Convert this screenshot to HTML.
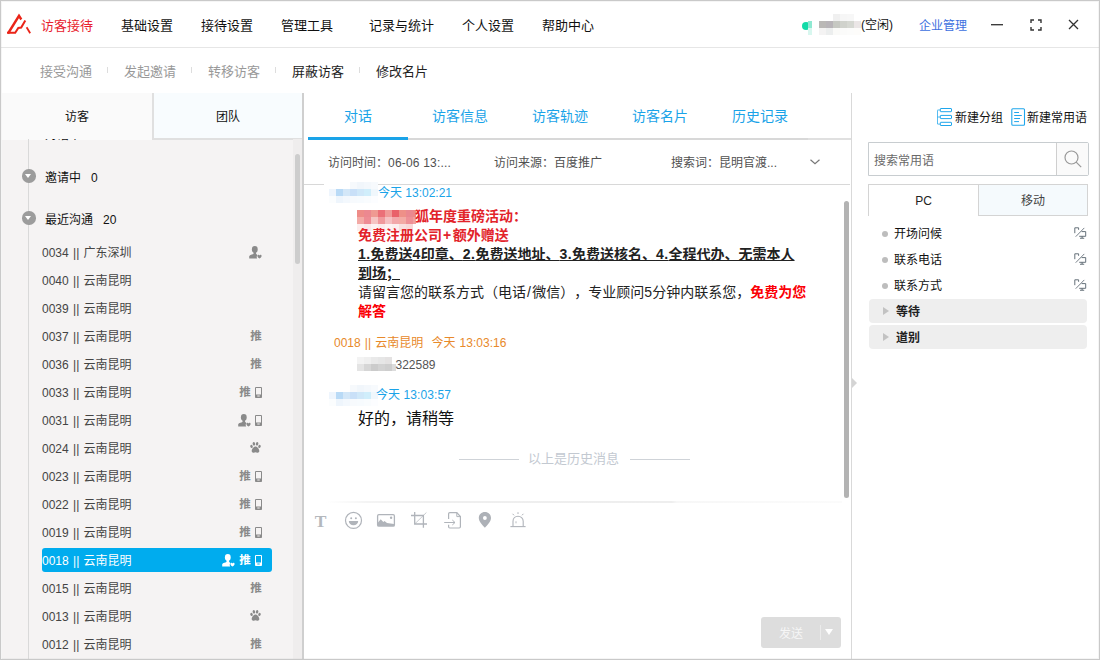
<!DOCTYPE html>
<html lang="zh-CN">
<head>
<meta charset="utf-8">
<title>访客接待</title>
<style>
*{box-sizing:border-box;margin:0;padding:0}
html,body{width:1100px;height:660px;overflow:hidden;background:#fff}
body{text-spacing-trim:space-all;font-kerning:none;font-family:"Liberation Sans","Noto Sans CJK SC",sans-serif;font-size:12px;color:#222;position:relative}
.abs{position:absolute}
#frame{position:absolute;left:0;top:0;width:1100px;height:660px;border:1px solid #c9c9c9;box-shadow:inset 0 0 0 1px rgba(200,200,200,.18);pointer-events:none;z-index:50}
/* top nav */
#nav{position:absolute;left:0;top:0;width:1100px;height:48px;border-bottom:1px solid #e6e6e6;background:#fff}
#nav .it{position:absolute;top:17px;font-size:13px;line-height:18px;color:#111;white-space:nowrap}
#nav .it.act{color:#e8232f}
#sub{position:absolute;left:0;top:48px;width:1100px;height:45px;background:#fff}
#sub .it{position:absolute;top:15px;font-size:13px;line-height:18px;color:#999;white-space:nowrap}
#sub .it.on{color:#222}
#sub .sep{position:absolute;top:19px;width:1px;height:6px;background:#ddd}
/* left */
#left{position:absolute;left:2px;top:93px;width:300px;height:566px;background:#f5f3f3}
#ltabs{position:absolute;left:0;top:0;width:300px;height:47px}
#ltabs .t{position:absolute;top:0;height:47px;text-align:center;line-height:48px;font-size:12px;color:#111}
#ltabs .t1{left:0;width:150px;background:#fafafa}
#ltabs .t2{left:150px;width:150px;background:#f8fcfe;border-left:2px solid #e0e0e0;border-bottom:2px solid #e0e0e0}
#lrule{position:absolute;left:302px;top:93px;width:2px;height:566px;background:#cfcfcf}
#tree{position:absolute;left:26px;top:46px;width:1px;height:520px;background:#d9d9d9}
.grp{position:absolute;left:45px;font-size:12px;line-height:16px;color:#111;white-space:nowrap}
.garrow{position:absolute;left:22px;width:13.500px;height:13.500px;border-radius:50%;background:#9c9c9c}
.garrow:after{content:"";position:absolute;left:3px;top:5px;border:3.5px solid transparent;border-top:4px solid #fff;border-bottom:0}
.row{position:absolute;left:42px;width:230px;height:24px;line-height:26px;word-spacing:1px;font-size:12px;color:#444;white-space:nowrap;border-radius:2px}
.row.sel{background:#00acee;color:#fff;border-radius:3px}
.row .ic{position:absolute;right:10px;top:0;height:24px;display:flex;align-items:center;gap:4px;color:#8a8a8a;font-size:10px;font-weight:bold}
.row.sel .ic{color:#fff}
.tui{font-size:11.500px;font-weight:bold;line-height:12px;display:inline-block;width:12px;margin-top:0;text-align:center}
#lsb{position:absolute;left:293px;top:139px;width:9px;height:520px;background:#efeded}
#lsbt{position:absolute;left:295px;top:154px;width:5px;height:110px;border-radius:3px;background:#cdcdcd}
/* center */
#ctabs .t{position:absolute;top:107px;font-size:14px;line-height:18px;color:#1aa3e8;white-space:nowrap}
#cund{position:absolute;left:308px;top:137px;width:100px;height:3px;background:#1aa3e8}
#cline{position:absolute;left:408px;top:138px;width:400px;height:2px;background:#d8d8d8}
#info{position:absolute;left:304px;top:140px;width:546px;height:45px;border-bottom:1px solid #d8d8d8}
#info span{position:absolute;top:15px;font-size:12px;line-height:16px;color:#505050;white-space:nowrap}
#csb{position:absolute;left:844px;top:201px;width:5px;height:297px;border-radius:2.500px;background:#b3b3b3}
.nm{position:absolute;font-size:12px;line-height:16px;white-space:nowrap}
.blue{color:#1aa3e8}.org{color:#e8892a}
.msg{position:absolute;left:358px;white-space:nowrap}
.msg{font-size:14px;line-height:19px;color:#222}
.msg i{font-style:normal;letter-spacing:.45px}
.b{font-weight:bold}.u{text-decoration:underline}.red{color:#e2232a}
#send{position:absolute;left:761px;top:617px;width:80px;height:31px;border-radius:3px;background:#dddddd}
#send .st{position:absolute;left:18px;top:8.500px;font-size:12px;line-height:16px;color:#f6f6f6}
#send .sd{position:absolute;left:59px;top:8px;width:1px;height:15px;background:#ebebeb}
#send .sa{position:absolute;left:64px;top:12px;border:4px solid transparent;border-top:6px solid #fff;border-bottom:0}
/* right */
.rt{position:absolute;top:110px;font-size:12px;line-height:16px;color:#111;white-space:nowrap}
#sbox{position:absolute;left:868px;top:142px;width:221px;height:34px;border-radius:0 2px 2px 0;border:1px solid #c8cdd0;background:#fff}
#sbox .ph{position:absolute;left:5px;top:10px;font-size:12px;line-height:16px;color:#6a6a6a}
#sbox .sbtn{position:absolute;right:0;top:0;width:32px;height:32px;border-left:1px solid #cfcfcf;background:#fafafa;display:flex;align-items:center;justify-content:center}
#rtabs{position:absolute;left:868px;top:184px;width:220px;height:32px}
#rtabs div{position:absolute;top:0;height:32px;line-height:33px;text-align:center;font-size:12px}
#rtabs .rt1{left:0;width:110px;border:1px solid #d4d4d4;border-bottom:0;border-right:0;color:#222;background:#fff}
#rtabs .rt2{left:110px;width:110px;border:1px solid #d4d4d4;color:#444;background:#f5fafd}
.ri{position:absolute;left:868px;width:220px;height:18px;line-height:18px;font-size:12px;color:#111;padding-left:26px;white-space:nowrap}
.ri i{position:absolute;left:13.500px;top:6px;width:6px;height:6px;border-radius:50%;background:#bdbdbd}
.ri .em{position:absolute;left:205.500px;top:1.500px}
.rg{position:absolute;left:869px;width:218px;height:24px;line-height:26px;border-radius:4px;background:#eeeeee;font-size:12px;font-weight:600;color:#222;padding-left:27px}
.rg s{position:absolute;left:14px;top:8px;border:4.500px solid transparent;border-left:6px solid #c2c2c2;border-right:0}
#rrule{position:absolute;left:851px;top:93px;width:1px;height:566px;background:#d9d9d9}
</style>
</head>
<body>
<div id="nav">
  <svg class="abs" style="left:0;top:0" width="40" height="48" viewBox="0 0 40 48"><g fill="none" stroke="#ea2418" stroke-linejoin="miter"><path d="M8 33.500L19 15.800L21.300 19.500" stroke-width="2.400"/><path d="M7 32.800H15.200L18.300 28L21.200 27.600L25.300 20.600" stroke-width="2"/><path d="M26.600 27.300L30.200 33.300" stroke-width="1.800"/></g></svg>
  <span class="it act" style="left:41px">访客接待</span>
  <span class="it" style="left:121px">基础设置</span>
  <span class="it" style="left:201px">接待设置</span>
  <span class="it" style="left:281px">管理工具</span>
  <span class="it" style="left:369px">记录与统计</span>
  <span class="it" style="left:462px">个人设置</span>
  <span class="it" style="left:542px">帮助中心</span>
  <span class="abs" style="left:801.500px;top:22px;width:8px;height:8px;border-radius:50%;background:#12dba8"></span><span class="abs" style="left:808px;top:21px;width:4px;height:7px;background:#8fe9d2"></span><span class="abs" style="left:808px;top:28px;width:4px;height:7px;background:#d8f7ef"></span><svg class="abs" style="left:819px;top:14px" width="42" height="21" viewBox="0 0 42 21" shape-rendering="crispEdges"><rect x="14" y="0" width="7" height="7" fill="#f0f0f0"/><rect x="21" y="0" width="7" height="7" fill="#f6f6f6"/><rect x="28" y="0" width="7" height="7" fill="#f7f7f7"/><rect x="0" y="7" width="7" height="7" fill="#bab8b6"/><rect x="7" y="7" width="7" height="7" fill="#b8b4b8"/><rect x="14" y="7" width="7" height="7" fill="#c6c8c2"/><rect x="21" y="7" width="7" height="7" fill="#d0d2cc"/><rect x="28" y="7" width="7" height="7" fill="#d6d8d2"/><rect x="35" y="7" width="7" height="7" fill="#ebe6e6"/><rect x="0" y="14" width="7" height="7" fill="#f4f3f3"/><rect x="7" y="14" width="7" height="7" fill="#eceeee"/><rect x="14" y="14" width="7" height="7" fill="#fafaf8"/><rect x="21" y="14" width="7" height="7" fill="#fbfbfa"/><rect x="28" y="14" width="7" height="7" fill="#fcfcfb"/><rect x="35" y="14" width="7" height="7" fill="#fdfcfa"/></svg>
  <span class="it" style="left:861px;top:16px;font-size:12px;color:#111">(空闲)</span>
  <span class="it" style="left:919px;font-size:12px;color:#3c6fe0">企业管理</span>
  <span class="abs" style="left:991px;top:24px;width:12px;height:2px;background:linear-gradient(#3c3c3c 50%,#b4b4b4 50%)"></span>
  <svg class="abs" style="left:1030px;top:19px" width="12" height="12" viewBox="0 0 12 12"><path d="M1 4V1h3M8 1h3v3M11 8v3H8M4 11H1V8" fill="none" stroke="#333" stroke-width="1.4"/></svg>
  <svg class="abs" style="left:1068px;top:19px" width="11" height="11" viewBox="0 0 11 11"><path d="M1 1l9 9M10 1l-9 9" fill="none" stroke="#333" stroke-width="1.3"/></svg>
</div>
<div id="sub">
  <span class="it" style="left:40px">接受沟通</span><span class="sep" style="left:107px"></span>
  <span class="it" style="left:124px">发起邀请</span><span class="sep" style="left:191px"></span>
  <span class="it" style="left:208px">转移访客</span><span class="sep" style="left:275px"></span>
  <span class="it on" style="left:292px">屏蔽访客</span><span class="sep" style="left:359px"></span>
  <span class="it on" style="left:376px">修改名片</span>
</div>

<div id="left">
  <div id="ltabs"><div class="t t1">访客</div><div class="t t2">团队</div></div>
  <div id="tree"></div>
</div>
<div id="lsb"></div><div id="lsbt"></div>
<div id="lrule"></div>
<div id="leftrows">
<div class="abs" style="left:28px;top:126px;width:260px;height:16px;overflow:hidden;"></div>
<div class="abs" style="left:2px;top:139px;width:290px;height:2px;overflow:hidden"><span class="grp" style="top:-12px;left:43px">对话中&nbsp;&nbsp;0</span></div>
<span class="garrow" style="top:169px"></span><span class="grp" style="top:170px">邀请中&nbsp;&nbsp;&nbsp;0</span>
<span class="garrow" style="top:211px"></span><span class="grp" style="top:212px">最近沟通&nbsp;&nbsp;&nbsp;20</span>
<div class="row" style="top:240px">0034 || 广东深圳<span class="ic"><svg width="13" height="13" viewBox="0 0 13 13"><ellipse cx="5.800" cy="3.400" rx="2.900" ry="3.300" fill="currentColor"/><rect x="4.500" y="5.500" width="2.600" height="3.500" fill="currentColor"/><path d="M0.200 12.400V10.600C0.200 9.600 1 9.200 4.600 8H7C8 8.400 8.300 8.800 8.300 9.600C7.600 10.200 7.500 11.400 8.200 12.400Z" fill="currentColor"/><path d="M8.600 9.200C9.200 8.600 10.200 8.800 10.500 9.600C10.800 8.800 11.800 8.600 12.400 9.200C13 10 12.400 11.200 10.500 12.600C8.600 11.200 8 10 8.600 9.200Z" fill="currentColor"/></svg></span></div>
<div class="row" style="top:268px">0040 || 云南昆明<span class="ic"></span></div>
<div class="row" style="top:296px">0039 || 云南昆明<span class="ic"></span></div>
<div class="row" style="top:324px">0037 || 云南昆明<span class="ic"><span class="tui">推</span></span></div>
<div class="row" style="top:352px">0036 || 云南昆明<span class="ic"><span class="tui">推</span></span></div>
<div class="row" style="top:380px">0033 || 云南昆明<span class="ic"><span class="tui">推</span><svg width="7" height="11" viewBox="0 0 7 11"><path d="M0.500 0.500H6.500V10.500H0.500Z" fill="none" stroke="currentColor" stroke-width="1"/><path d="M0.500 7.600H6.500V10.500H0.500ZM2.300 8.600V9.600H4.700V8.600Z" fill="currentColor" fill-rule="evenodd"/></svg></span></div>
<div class="row" style="top:408px">0031 || 云南昆明<span class="ic"><svg width="13" height="13" viewBox="0 0 13 13"><ellipse cx="5.800" cy="3.400" rx="2.900" ry="3.300" fill="currentColor"/><rect x="4.500" y="5.500" width="2.600" height="3.500" fill="currentColor"/><path d="M0.200 12.400V10.600C0.200 9.600 1 9.200 4.600 8H7C8 8.400 8.300 8.800 8.300 9.600C7.600 10.200 7.500 11.400 8.200 12.400Z" fill="currentColor"/><path d="M8.600 9.200C9.200 8.600 10.200 8.800 10.500 9.600C10.800 8.800 11.800 8.600 12.400 9.200C13 10 12.400 11.200 10.500 12.600C8.600 11.200 8 10 8.600 9.200Z" fill="currentColor"/></svg><svg width="7" height="11" viewBox="0 0 7 11"><path d="M0.500 0.500H6.500V10.500H0.500Z" fill="none" stroke="currentColor" stroke-width="1"/><path d="M0.500 7.600H6.500V10.500H0.500ZM2.300 8.600V9.600H4.700V8.600Z" fill="currentColor" fill-rule="evenodd"/></svg></span></div>
<div class="row" style="top:436px">0024 || 云南昆明<span class="ic"><svg width="11" height="11" viewBox="0 0 11 11" style="position:relative;top:-1px;left:-1px"><ellipse cx="1.500" cy="4.400" rx="1.200" ry="1.600" fill="currentColor" transform="rotate(-20 1.500 4.400)"/><ellipse cx="3.900" cy="1.800" rx="1.250" ry="1.700" fill="currentColor" transform="rotate(-8 3.900 1.800)"/><ellipse cx="7.100" cy="1.800" rx="1.250" ry="1.700" fill="currentColor" transform="rotate(8 7.100 1.800)"/><ellipse cx="9.500" cy="4.400" rx="1.200" ry="1.600" fill="currentColor" transform="rotate(20 9.500 4.400)"/><path d="M5.500 4.600C7.300 4.600 9.300 7.400 9.300 9.100C9.300 10.300 8.300 10.900 7.300 10.700C6.600 10.500 6.100 10.200 5.500 10.200S4.400 10.500 3.700 10.700C2.700 10.900 1.700 10.300 1.700 9.100C1.700 7.400 3.700 4.600 5.500 4.600Z" fill="currentColor"/></svg></span></div>
<div class="row" style="top:464px">0023 || 云南昆明<span class="ic"><span class="tui">推</span><svg width="7" height="11" viewBox="0 0 7 11"><path d="M0.500 0.500H6.500V10.500H0.500Z" fill="none" stroke="currentColor" stroke-width="1"/><path d="M0.500 7.600H6.500V10.500H0.500ZM2.300 8.600V9.600H4.700V8.600Z" fill="currentColor" fill-rule="evenodd"/></svg></span></div>
<div class="row" style="top:492px">0022 || 云南昆明<span class="ic"><span class="tui">推</span><svg width="7" height="11" viewBox="0 0 7 11"><path d="M0.500 0.500H6.500V10.500H0.500Z" fill="none" stroke="currentColor" stroke-width="1"/><path d="M0.500 7.600H6.500V10.500H0.500ZM2.300 8.600V9.600H4.700V8.600Z" fill="currentColor" fill-rule="evenodd"/></svg></span></div>
<div class="row" style="top:520px">0019 || 云南昆明<span class="ic"><span class="tui">推</span><svg width="7" height="11" viewBox="0 0 7 11"><path d="M0.500 0.500H6.500V10.500H0.500Z" fill="none" stroke="currentColor" stroke-width="1"/><path d="M0.500 7.600H6.500V10.500H0.500ZM2.300 8.600V9.600H4.700V8.600Z" fill="currentColor" fill-rule="evenodd"/></svg></span></div>
<div class="row sel" style="top:548px">0018 || 云南昆明<span class="ic"><svg width="13" height="13" viewBox="0 0 13 13"><ellipse cx="5.800" cy="3.400" rx="2.900" ry="3.300" fill="currentColor"/><rect x="4.500" y="5.500" width="2.600" height="3.500" fill="currentColor"/><path d="M0.200 12.400V10.600C0.200 9.600 1 9.200 4.600 8H7C8 8.400 8.300 8.800 8.300 9.600C7.600 10.200 7.500 11.400 8.200 12.400Z" fill="currentColor"/><path d="M8.600 9.200C9.200 8.600 10.200 8.800 10.500 9.600C10.800 8.800 11.800 8.600 12.400 9.200C13 10 12.400 11.200 10.500 12.600C8.600 11.200 8 10 8.600 9.200Z" fill="currentColor"/></svg><span class="tui">推</span><svg width="7" height="11" viewBox="0 0 7 11"><path d="M0.500 0.500H6.500V10.500H0.500Z" fill="none" stroke="currentColor" stroke-width="1"/><path d="M0.500 7.600H6.500V10.500H0.500ZM2.300 8.600V9.600H4.700V8.600Z" fill="currentColor" fill-rule="evenodd"/></svg></span></div>
<div class="row" style="top:576px">0015 || 云南昆明<span class="ic"><span class="tui">推</span></span></div>
<div class="row" style="top:604px">0013 || 云南昆明<span class="ic"><svg width="11" height="11" viewBox="0 0 11 11" style="position:relative;top:-1px;left:-1px"><ellipse cx="1.500" cy="4.400" rx="1.200" ry="1.600" fill="currentColor" transform="rotate(-20 1.500 4.400)"/><ellipse cx="3.900" cy="1.800" rx="1.250" ry="1.700" fill="currentColor" transform="rotate(-8 3.900 1.800)"/><ellipse cx="7.100" cy="1.800" rx="1.250" ry="1.700" fill="currentColor" transform="rotate(8 7.100 1.800)"/><ellipse cx="9.500" cy="4.400" rx="1.200" ry="1.600" fill="currentColor" transform="rotate(20 9.500 4.400)"/><path d="M5.500 4.600C7.300 4.600 9.300 7.400 9.300 9.100C9.300 10.300 8.300 10.900 7.300 10.700C6.600 10.500 6.100 10.200 5.500 10.200S4.400 10.500 3.700 10.700C2.700 10.900 1.700 10.300 1.700 9.100C1.700 7.400 3.700 4.600 5.500 4.600Z" fill="currentColor"/></svg></span></div>
<div class="row" style="top:632px">0012 || 云南昆明<span class="ic"><span class="tui">推</span></span></div>
</div>

<div id="center">
  <div id="ctabs">
    <span class="t" style="left:344px">对话</span>
    <span class="t" style="left:432px">访客信息</span>
    <span class="t" style="left:532px">访客轨迹</span>
    <span class="t" style="left:632px">访客名片</span>
    <span class="t" style="left:732px">历史记录</span>
  </div>
  <div id="cline"></div><div class="abs" style="left:808px;top:138px;width:43px;height:2px;background:#e0e0e0"></div><div id="cund"></div>
  <div id="info">
    <span style="left:24px">访问时间：<i style="font-style:normal;letter-spacing:.2px">06-06 13:...</i></span>
    <span style="left:190px">访问来源：百度推广</span>
    <span style="left:367px">搜索词：昆明官渡...</span>
    <svg class="abs" style="left:506px;top:19px" width="10" height="6" viewBox="0 0 10 6"><path d="M0.500 0.800l4.500 3.800 4.500-3.800" fill="none" stroke="#777" stroke-width="1.200"/></svg>
  </div>
  <div id="chat">
    <span class="abs" style="left:324px;top:183px;width:51px;height:3px;background:#fff"></span>
    <svg class="abs" style="left:329px;top:182px" width="49" height="21" viewBox="0 0 49 21" shape-rendering="crispEdges"><rect x="21" y="0" width="7" height="7" fill="#f6f9fc"/><rect x="28" y="0" width="7" height="7" fill="#f1f6fb"/><rect x="35" y="0" width="7" height="7" fill="#f4f8fc"/><rect x="42" y="0" width="7" height="7" fill="#f7fafd"/><rect x="0" y="7" width="7" height="7" fill="#eef5fd"/><rect x="7" y="7" width="7" height="7" fill="#b9daf6"/><rect x="14" y="7" width="7" height="7" fill="#d3e7f8"/><rect x="21" y="7" width="7" height="7" fill="#c9e0f8"/><rect x="28" y="7" width="7" height="7" fill="#d0e8f9"/><rect x="35" y="7" width="7" height="7" fill="#d0eefb"/><rect x="42" y="7" width="7" height="7" fill="#f0f7fc"/><rect x="0" y="14" width="7" height="7" fill="#fbfdfe"/><rect x="7" y="14" width="7" height="7" fill="#eef5fc"/><rect x="14" y="14" width="7" height="7" fill="#f3f8fd"/><rect x="21" y="14" width="7" height="7" fill="#f7fafd"/><rect x="28" y="14" width="7" height="7" fill="#f7fbfe"/><rect x="35" y="14" width="7" height="7" fill="#f9fcfe"/><rect x="42" y="14" width="7" height="7" fill="#fcfdff"/></svg>
    <span class="nm blue" style="left:378px;top:185px">今天 13:02:21</span>
    <svg class="abs" style="left:357px;top:210px" width="59" height="21" viewBox="0 0 59 21" shape-rendering="crispEdges"><rect x="0" y="0" width="7" height="7" fill="#ee8c88"/><rect x="7" y="0" width="7" height="7" fill="#ec8890"/><rect x="14" y="0" width="7" height="7" fill="#ef9a92"/><rect x="21" y="0" width="7" height="7" fill="#eb7078"/><rect x="28" y="0" width="7" height="7" fill="#f09a98"/><rect x="35" y="0" width="7" height="7" fill="#e9626a"/><rect x="42" y="0" width="7" height="7" fill="#ee9088"/><rect x="49" y="0" width="7" height="7" fill="#ea8890"/><rect x="56" y="0" width="7" height="7" fill="#ee8888"/><rect x="0" y="7" width="7" height="7" fill="#f3aaa6"/><rect x="7" y="7" width="7" height="7" fill="#ee8c94"/><rect x="14" y="7" width="7" height="7" fill="#f6c4c2"/><rect x="21" y="7" width="7" height="7" fill="#f0999c"/><rect x="28" y="7" width="7" height="7" fill="#f5c0c2"/><rect x="35" y="7" width="7" height="7" fill="#f2a8aa"/><rect x="42" y="7" width="7" height="7" fill="#f3aaa4"/><rect x="49" y="7" width="7" height="7" fill="#ee9096"/><rect x="56" y="7" width="7" height="7" fill="#f0a0a0"/><rect x="0" y="14" width="7" height="7" fill="#fdeeee"/><rect x="7" y="14" width="7" height="7" fill="#fbe8e8"/><rect x="14" y="14" width="7" height="7" fill="#fdf2f2"/><rect x="21" y="14" width="7" height="7" fill="#fcecec"/><rect x="28" y="14" width="7" height="7" fill="#fdf3f3"/><rect x="35" y="14" width="7" height="7" fill="#fcefef"/><rect x="42" y="14" width="7" height="7" fill="#f9dede"/><rect x="49" y="14" width="7" height="7" fill="#f8d8d8"/></svg>
    <span class="msg b red" style="left:415px;top:207px">狐年度重磅活动：</span>
    <span class="msg b red" style="top:226px">免费注册公司<i style="padding:0 1px">+</i>额外赠送</span>
    <span class="msg b u" style="top:245px"><i>1.</i>免费送<i>4</i>印章、<i>2.</i>免费送地址、<i>3.</i>免费送核名、<i>4.</i>全程代办、无需本人</span>
    <span class="msg b u" style="top:264px">到场；</span>
    <span class="msg" style="top:283px">请留言您的联系方式（电话<i style="padding:0 1px">/</i>微信），专业顾问5分钟内联系您，<b style="color:#fb0006">免费为您</b></span>
    <span class="msg b" style="top:302px;color:#fb0006">解答</span>
    <span class="nm org" style="left:334px;top:335px;word-spacing:.800px">0018 || 云南昆明&nbsp;&nbsp;今天 13:03:16</span>
    <svg class="abs" style="left:357px;top:357px" width="38.5" height="14" viewBox="0 0 38.5 14" shape-rendering="crispEdges"><rect x="0" y="0" width="7" height="7" fill="#f3f3f3"/><rect x="7" y="0" width="7" height="7" fill="#efefef"/><rect x="14" y="0" width="7" height="7" fill="#e9e9e9"/><rect x="21" y="0" width="7" height="7" fill="#e6e6e6"/><rect x="28" y="0" width="7" height="7" fill="#e4e2e2"/><rect x="0" y="7" width="7" height="7" fill="#e4e4e4"/><rect x="7" y="7" width="7" height="7" fill="#d6d6d6"/><rect x="14" y="7" width="7" height="7" fill="#cbcbcb"/><rect x="21" y="7" width="7" height="7" fill="#d2d2d2"/><rect x="28" y="7" width="7" height="7" fill="#cecece"/><rect x="35" y="7" width="7" height="7" fill="#dcdcdc"/></svg>
    <span class="nm" style="left:395.500px;top:357px;color:#555">322589</span>
    <svg class="abs" style="left:329px;top:385px" width="49" height="21" viewBox="0 0 49 21" shape-rendering="crispEdges"><rect x="21" y="0" width="7" height="7" fill="#f6f9fc"/><rect x="28" y="0" width="7" height="7" fill="#f1f6fb"/><rect x="35" y="0" width="7" height="7" fill="#f4f8fc"/><rect x="42" y="0" width="7" height="7" fill="#f7fafd"/><rect x="0" y="7" width="7" height="7" fill="#eef5fd"/><rect x="7" y="7" width="7" height="7" fill="#b9daf6"/><rect x="14" y="7" width="7" height="7" fill="#d3e7f8"/><rect x="21" y="7" width="7" height="7" fill="#c9e0f8"/><rect x="28" y="7" width="7" height="7" fill="#d0e8f9"/><rect x="35" y="7" width="7" height="7" fill="#d0eefb"/><rect x="42" y="7" width="7" height="7" fill="#f0f7fc"/><rect x="0" y="14" width="7" height="7" fill="#fbfdfe"/><rect x="7" y="14" width="7" height="7" fill="#eef5fc"/><rect x="14" y="14" width="7" height="7" fill="#f3f8fd"/><rect x="21" y="14" width="7" height="7" fill="#f7fafd"/><rect x="28" y="14" width="7" height="7" fill="#f7fbfe"/><rect x="35" y="14" width="7" height="7" fill="#f9fcfe"/><rect x="42" y="14" width="7" height="7" fill="#fcfdff"/></svg>
    <span class="nm blue" style="left:376px;top:387px;letter-spacing:.08px">今天 13:03:57</span>
    <span class="msg" style="top:408px;font-size:16px;line-height:22px;color:#111">好的，请稍等</span>
    <span class="abs" style="left:459px;top:459px;width:60px;height:1px;background:#cfd3d8"></span>
    <span class="abs" style="left:630px;top:459px;width:60px;height:1px;background:#cfd3d8"></span>
    <span class="msg" style="left:528px;top:450px;font-size:13px;line-height:18px;color:#c3c9d1">以上是历史消息</span>
    <div id="csb"></div>
    <span class="abs" style="left:326px;top:501px;width:516px;height:2px;background:linear-gradient(90deg,#fff,#f4f4f4 8%,#efefef 20%,#eeeeee 67%,#f7f7f7 68%,#fbfbfb)"></span>
  </div>
  <div id="tools">
  <span class="abs" style="left:314px;top:510px;width:13px;font:bold 17.500px/22px 'Liberation Serif',serif;color:#b4b8bd;text-align:center">T</span>
  <svg class="abs" style="left:340px;top:506px" width="194" height="28" viewBox="340 506 194 28" fill="none" stroke="#b0b4ba" stroke-width="1.200">
    <circle cx="353.500" cy="520.400" r="8"/>
    <circle cx="351.200" cy="518.200" r="1" fill="#b0b4ba" stroke="none"/><circle cx="355.900" cy="518.200" r="1" fill="#b0b4ba" stroke="none"/>
    <path d="M348.800 521H358.200C358.200 523.600 356.200 525.300 353.500 525.300S348.800 523.600 348.800 521Z" fill="#b0b4ba" stroke="none"/>
    <rect x="377.600" y="514.600" width="16.800" height="11.600" rx="1.300" stroke-width="1.300"/>
    <path d="M378 526V522.500L380.700 519.300L383.300 522L384.500 521L387 523L394 524V526Z" fill="#b0b4ba" stroke="none"/>
    <circle cx="391.100" cy="517.800" r="1.200" fill="#b0b4ba" stroke="none"/>
    <path d="M414.700 512V524H427M411 515.500H423.400V527.700" stroke-width="1.300"/>
    <path d="M415 523.700L426.400 512.500" stroke-width="0.700"/>
    <path d="M448.600 519V513.800Q448.600 512.600 449.800 512.600H456.800L460.400 516.600V526.800Q460.400 528 459.200 528H449.800Q448.600 528 448.600 526.800V524.800"/>
    <path d="M456.800 512.600V516.600H460.400" stroke-width="1"/>
    <path d="M444.200 522.500H455M452.300 520L455 522.500L452.300 525" stroke-width="1"/>
    <path d="M484.900 512C488.300 512 491 514.600 491 517.900C491 521.500 487.200 525 484.900 527.700C482.600 525 478.800 521.500 478.800 517.900C478.800 514.600 481.500 512 484.900 512ZM484.900 516.100A1.900 1.900 0 1 0 484.900 519.900A1.900 1.900 0 1 0 484.900 516.100Z" fill="#adb1b7" stroke="none" fill-rule="evenodd"/>
    <path d="M513 526.500V521.300C513 518.300 515.200 516.200 518 516.200S523.200 518.300 523.200 521.300V526.500" stroke-width="1.100"/>
    <path d="M510.400 526.600H525.600" stroke-width="1.100"/>
    <path d="M516 521.300V523.300" stroke-width="0.900"/>
    <path d="M512.600 513.800L514 515.300M518 512.200V514M523.400 513.800L522 515.300" stroke-width="1"/>
  </svg>
</div>
  <div id="send"><span class="st">发送</span><span class="sd"></span><span class="sa"></span></div>
</div>
<div id="rrule"></div>
<div id="right">
  <svg class="abs" style="left:936px;top:107px" width="17" height="20" viewBox="936 107 17 20" fill="none" stroke="#1fa6ec" stroke-width="1"><path d="M937.500 110.300V124M937.500 110H940M937.500 117H940M937.500 124.100H940" stroke-opacity=".75"/><rect x="940.300" y="108.500" width="11.200" height="3.200" rx="0.500"/><rect x="940.300" y="115.400" width="11.200" height="3.200" rx="0.500"/><rect x="940.300" y="122.300" width="11.200" height="3.200" rx="0.500"/></svg>
  <span class="rt" style="left:955px">新建分组</span>
  <svg class="abs" style="left:1010px;top:107px" width="17" height="20" viewBox="1010 107 17 20" fill="none" stroke="#1fa6ec" stroke-width="1.100"><rect x="1011.800" y="108.700" width="12.700" height="16.600" rx="1"/><path d="M1014.200 112.500H1019M1014.200 115.500H1021.800M1014.200 118.500H1020M1014.200 121.600H1019" stroke-width="1"/></svg>
  <span class="rt" style="left:1027px">新建常用语</span>
  <div id="sbox"><span class="ph">搜索常用语</span><div class="sbtn"><svg width="20" height="20" viewBox="0 0 20 20"><circle cx="8.500" cy="8.500" r="6.500" fill="none" stroke="#999" stroke-width="1.200"/><path d="M13.200 13.200l5 5" stroke="#999" stroke-width="1.200"/></svg></div></div>
  <div id="rtabs"><div class="rt1">PC</div><div class="rt2">移动</div></div>
  <div class="ri" style="top:225px"><i></i>开场问候<svg class="em" width="13" height="13" viewBox="0 0 13 13" fill="none" stroke="#66717a" stroke-width="1"><path d="M0.800 6.200V0.800H4.600V2.800"/><path d="M10.300 0.900L1.700 9.700" stroke-width="0.900"/><path d="M7.600 4.600H11.700V9.300H5.200"/><path d="M8.100 9.300V10.800M6 11.300H10.200" stroke-width="1.100"/></svg></div>
  <div class="ri" style="top:251px"><i></i>联系电话<svg class="em" width="13" height="13" viewBox="0 0 13 13" fill="none" stroke="#66717a" stroke-width="1"><path d="M0.800 6.200V0.800H4.600V2.800"/><path d="M10.300 0.900L1.700 9.700" stroke-width="0.900"/><path d="M7.600 4.600H11.700V9.300H5.200"/><path d="M8.100 9.300V10.800M6 11.300H10.200" stroke-width="1.100"/></svg></div>
  <div class="ri" style="top:277px"><i></i>联系方式<svg class="em" width="13" height="13" viewBox="0 0 13 13" fill="none" stroke="#66717a" stroke-width="1"><path d="M0.800 6.200V0.800H4.600V2.800"/><path d="M10.300 0.900L1.700 9.700" stroke-width="0.900"/><path d="M7.600 4.600H11.700V9.300H5.200"/><path d="M8.100 9.300V10.800M6 11.300H10.200" stroke-width="1.100"/></svg></div>
  <div class="rg" style="top:299px"><s></s>等待</div>
  <div class="rg" style="top:325px"><s></s>道别</div>
  <span class="abs" style="left:852px;top:378px;border:5px solid transparent;border-left:5px solid #d4d4d4;border-right:0"></span>
</div>
<div id="frame"></div>
</body>
</html>
